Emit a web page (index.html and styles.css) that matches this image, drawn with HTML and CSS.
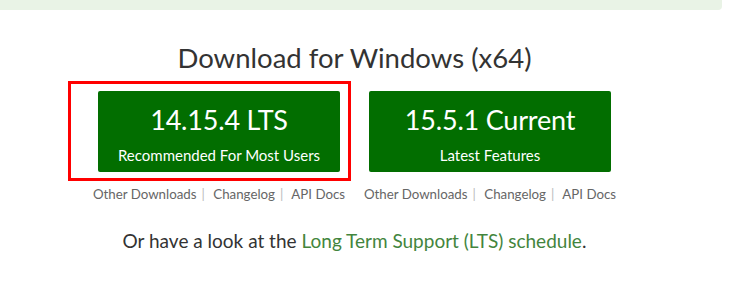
FILE: index.html
```html
<!DOCTYPE html>
<html lang="en">
<head>
  <meta charset="UTF-8" />
  <title>Downloads</title>
  <link rel="stylesheet" href="styles.css">
</head>
<body>
  <div class="topbar"></div>

  <div class="main">
    <h2 class="title">Download for Windows (x64)</h2>

    <div class="downloads">
      <div class="dl-col">
        <span class="highlight"></span>
        <a class="dl-btn" href="#">
          <span class="version">14.15.4 LTS</span>
          <span class="tagline">Recommended For Most Users</span>
        </a>
        <div class="dl-links">
          <a href="#">Other Downloads</a><span class="pipe">|</span>
          <a href="#">Changelog</a><span class="pipe">|</span>
          <a href="#">API Docs</a>
        </div>
      </div>

      <div class="dl-col">
        <a class="dl-btn" href="#">
          <span class="version">15.5.1 Current</span>
          <span class="tagline">Latest Features</span>
        </a>
        <div class="dl-links">
          <a href="#">Other Downloads</a><span class="pipe">|</span>
          <a href="#">Changelog</a><span class="pipe">|</span>
          <a href="#">API Docs</a>
        </div>
      </div>
    </div>

    <p class="schedule">Or have a look at the <a href="#">Long Term Support (LTS) schedule</a>.</p>
  </div>
</body>
</html>
```

FILE: styles.css
```css
body {
  margin: 0;
  font-family: Lato, "Open Sans", sans-serif;
  color: #333;
  background: #fff;
}

a {
  text-decoration: none;
}

.topbar {
  width: 722px;
  height: 10px;
  background-color: #e9f3e6;
  border-bottom-right-radius: 4px;
}

.main {
  width: 709px;
  text-align: center;
}

.title {
  margin: 30px 0 0;
  font-size: 27.5px;
  line-height: 36px;
  font-weight: 400;
  color: #333;
}

.downloads {
  display: flex;
  justify-content: center;
  gap: 21px;
  margin-top: 15px;
}

.dl-col {
  position: relative;
  width: 250px;
  display: flex;
  flex-direction: column;
  align-items: center;
}

.highlight {
  position: absolute;
  left: -26px;
  top: -10px;
  width: 277px;
  height: 94px;
  border: 3px solid #f00;
}

.dl-btn {
  width: 242px;
  height: 81px;
  box-sizing: border-box;
  padding-top: 11px;
  background-color: #026e00;
  border-radius: 2px;
  color: #fff;
  display: flex;
  flex-direction: column;
  align-items: center;
}

.version {
  font-size: 27px;
  line-height: 36px;
  letter-spacing: -0.2px;
}

.tagline {
  margin-top: 7px;
  font-size: 15px;
  line-height: 20px;
}

.dl-links {
  margin-top: 12px;
  font-size: 13.3px;
  line-height: 20px;
  white-space: nowrap;
}

.dl-links a {
  color: #666;
}

.pipe {
  color: #bbb;
  margin: 0 5px;
}

.schedule {
  margin: 25px 0 0;
  font-size: 19px;
  line-height: 24px;
}

.schedule a {
  color: #43853d;
}
```
